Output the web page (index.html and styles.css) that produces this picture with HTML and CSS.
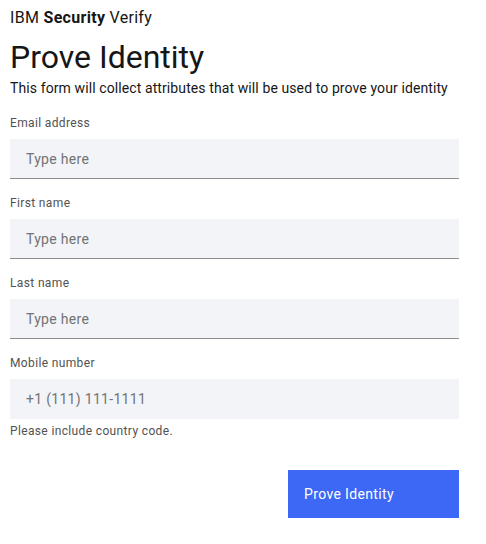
FILE: index.html
```html
<!DOCTYPE html>
<html lang="en">
<head>
<meta charset="utf-8">
<title>Prove Identity</title>
<link rel="stylesheet" href="styles.css">
</head>
<body>
<main class="page">
  <header class="brand"><span class="brand-ibm">IBM</span> <span class="brand-security">Security</span> <span class="brand-verify">Verify</span></header>
  <h1 class="title">Prove Identity</h1>
  <p class="intro">This form will collect attributes that will be used to prove your identity</p>
  <form class="form">
    <div class="field">
      <label class="label" for="email">Email address</label>
      <input class="input" id="email" type="text" placeholder="Type here">
    </div>
    <div class="field">
      <label class="label" for="first">First name</label>
      <input class="input" id="first" type="text" placeholder="Type here">
    </div>
    <div class="field">
      <label class="label" for="last">Last name</label>
      <input class="input" id="last" type="text" placeholder="Type here">
    </div>
    <div class="field field-last">
      <label class="label" for="mobile">Mobile number</label>
      <input class="input input-plain" id="mobile" type="text" placeholder="+1 (111) 111-1111">
      <div class="helper">Please include country code.</div>
    </div>
    <div class="actions">
      <button class="button" type="button">Prove Identity</button>
    </div>
  </form>
</main>
</body>
</html>
```
FILE: styles.css
```css
* { box-sizing: border-box; }
html, body { margin: 0; padding: 0; background: #ffffff; }
body {
  font-family: Roboto, "Noto Sans", sans-serif;
  color: #161616;
}
.page {
  width: 449px;
  margin-left: 10px;
  padding-top: 8px;
}
.brand {
  font-size: 16px;
  line-height: 20px;
  height: 22px;
  letter-spacing: 0.3px;
}
.brand-security { font-weight: 700; }
.title {
  margin: 7px 0 0 0;
  font-size: 32px;
  font-weight: 400;
  line-height: 40px;
}
.intro {
  margin: 1px 0 0 0;
  font-size: 14px;
  line-height: 20px;
  letter-spacing: 0.1px;
  white-space: nowrap;
}
.form {
  display: flex;
  flex-direction: column;
  margin-top: 17px;
}
.field {
  display: flex;
  flex-direction: column;
  margin-bottom: 16px;
}
.field-last { margin-bottom: 31px; }
.label {
  font-size: 12px;
  line-height: 16px;
  color: #525252;
  letter-spacing: 0.36px;
  margin-bottom: 8px;
}
.input {
  height: 40px;
  border: 0;
  border-bottom: 1px solid #8d8d8d;
  background: #f2f4f8;
  padding: 0 16px;
  font-family: inherit;
  font-size: 14px;
  letter-spacing: 0.3px;
  color: #161616;
  outline: none;
}
.input::placeholder { color: #737373; }
.input-plain { border-bottom-color: #f2f4f8; }
.helper {
  margin-top: 4px;
  font-size: 12px;
  line-height: 16px;
  color: #525252;
  letter-spacing: 0.36px;
}
.actions {
  display: flex;
  justify-content: flex-end;
}
.button {
  width: 171px;
  height: 48px;
  border: 0;
  background: #3c68f5;
  color: #ffffff;
  font-family: inherit;
  font-size: 14px;
  letter-spacing: 0.36px;
  text-align: left;
  padding: 0 16px;
}
```
